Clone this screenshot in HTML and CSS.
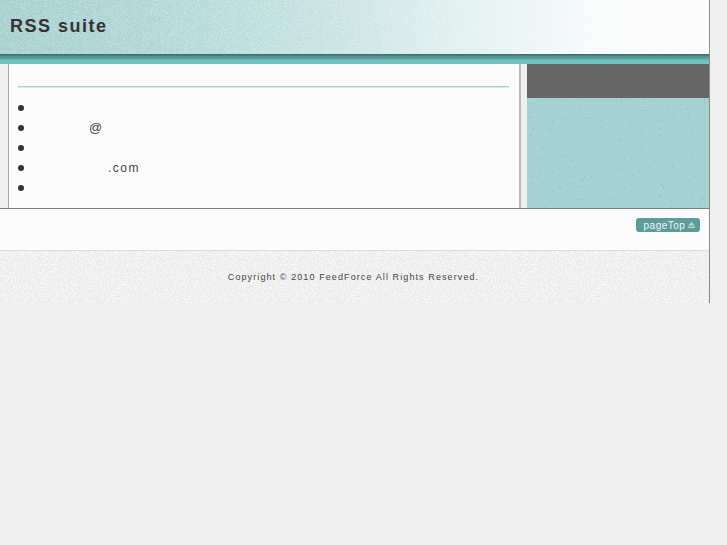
FILE: index.html
```html
<!DOCTYPE html>
<html lang="en">
<head>
<meta charset="utf-8">
<title>RSS suite</title>
<link rel="stylesheet" href="styles.css">
</head>
<body>
<div class="page">
  <header class="header"><h1 class="logo">RSS suite</h1></header>
  <div class="band"></div>
  <div class="main">
    <div class="content">
      <div class="rule"></div>
      <ul class="list">
        <li></li>
        <li><span class="at">@</span></li>
        <li></li>
        <li><span class="dom">.com</span></li>
        <li></li>
      </ul>
    </div>
    <div class="gap"></div>
    <aside class="side"><div class="side-head"></div></aside>
  </div>
  <div class="top-row">
    <a class="page-top">pageTop <svg class="tri" width="7" height="6" viewBox="0 0 7 6"><path d="M3.5 0 7 3.5H0Z" fill="#b9d8d6"/><path d="M0 4.6h7V6H0Z" fill="#b9d8d6"/></svg></a>
  </div>
  <footer class="footer"><p class="copy">Copyright © 2010 FeedForce All Rights Reserved.</p></footer>
</div>
</body>
</html>
```
FILE: styles.css
```css
html, body { margin: 0; padding: 0; }
body { background: #efefef; font-family: "Liberation Sans", Arial, sans-serif; color: #333; }
.page { width: 709px; border-right: 1px solid #8a8a8a; }
.header {
  height: 54px; box-sizing: border-box; display: flex; align-items: center; padding: 0 0 1px 10px;
  background:
    url("data:image/svg+xml,%3Csvg xmlns='http://www.w3.org/2000/svg' width='240' height='240'%3E%3Cfilter id='n' x='0' y='0' width='100%25' height='100%25' color-interpolation-filters='sRGB'%3E%3CfeTurbulence type='fractalNoise' baseFrequency='.9' numOctaves='2' seed='4' stitchTiles='stitch'/%3E%3CfeColorMatrix values='0 0 0 0 1 0 0 0 0 1 0 0 0 0 1 14 0 0 0 -7.2'/%3E%3C/filter%3E%3Crect width='240' height='240' filter='url(%23n)' opacity='.22'/%3E%3C/svg%3E"),
    linear-gradient(90deg, #a6d0cf 0, #b6d9d9 200px, #c8e3e3 330px, #e5f2f2 480px, #f8fbfb 600px, #fcfcfc 640px);
}
.logo { margin: 0; font-size: 18px; font-weight: bold; letter-spacing: 1.5px; color: #333; }
.band { height: 10px; background: linear-gradient(#3f6f6e 0, #3f6f6e 1px, #4f8f8d 2px, #5fa5a2 5px, #72c2be 6px, #74c3bf 10px); }
.main { display: flex; height: 144px; border-bottom: 1px solid #7d7d7d; }
.content { width: 513px; margin-left: 8px; border-left: 1px solid #a8a8a8; border-right: 2px solid #b9b9b9; background: #fcfcfc; padding: 0 10px 0 9px; box-sizing: border-box; }
.rule { margin-top: 22px; height: 1px; background: #a5d4d3; box-shadow: 0 1px 0 #d7ebea; }
.list { margin: 11px 0 0; padding: 0; list-style: none; font-size: 13px; letter-spacing: 1px; color: #444; }
.list li { height: 20px; line-height: 20px; display: flex; align-items: center; }
.list li::before { content: ""; width: 6px; height: 6px; margin-bottom: 1px; border-radius: 50%; background: #333; }
.at { margin-left: 65px; }
.dom { margin-left: 84px; font-size: 12px; letter-spacing: 1.5px; }
.gap { width: 6px; background: #f0f0f0; }
.side {
  flex: 1;
  background:
    url("data:image/svg+xml,%3Csvg xmlns='http://www.w3.org/2000/svg' width='240' height='240'%3E%3Cfilter id='n' x='0' y='0' width='100%25' height='100%25' color-interpolation-filters='sRGB'%3E%3CfeTurbulence type='fractalNoise' baseFrequency='.9' numOctaves='2' seed='9' stitchTiles='stitch'/%3E%3CfeColorMatrix values='0 0 0 0 .4 0 0 0 0 .78 0 0 0 0 .76 14 0 0 0 -10.2'/%3E%3C/filter%3E%3Crect width='240' height='240' filter='url(%23n)'/%3E%3C/svg%3E"),
    #a6d2d2;
}
.side-head { height: 34px; background: #666; }
.top-row { height: 42px; background: #fcfcfc; display: flex; justify-content: flex-end; align-items: flex-start; padding: 9px 9px 0 0; box-sizing: border-box; border-bottom: 1px solid #ddd; }
.page-top { display: flex; align-items: center; justify-content: center; gap: 3px; width: 64px; height: 14px; border-radius: 3px; background: #5b9d9b; color: #eef7f6; font-size: 10px; letter-spacing: .5px; padding-left: 3px; box-sizing: border-box; }
.tri { display: block; }
.footer {
  height: 52px; display: flex; justify-content: center; align-items: center; padding: 0; box-sizing: border-box;
  background:
    url("data:image/svg+xml,%3Csvg xmlns='http://www.w3.org/2000/svg' width='240' height='240'%3E%3Cfilter id='n' x='0' y='0' width='100%25' height='100%25' color-interpolation-filters='sRGB'%3E%3CfeTurbulence type='fractalNoise' baseFrequency='.9' numOctaves='2' seed='2' stitchTiles='stitch'/%3E%3CfeColorMatrix values='0 0 0 0 1 0 0 0 0 1 0 0 0 0 1 14 0 0 0 -7'/%3E%3C/filter%3E%3Crect width='240' height='240' filter='url(%23n)' opacity='.6'/%3E%3C/svg%3E"),
    #ececec;
}
.copy { margin: 0 2px 0 0; font-size: 9px; letter-spacing: 1.1px; color: #444; }
```
